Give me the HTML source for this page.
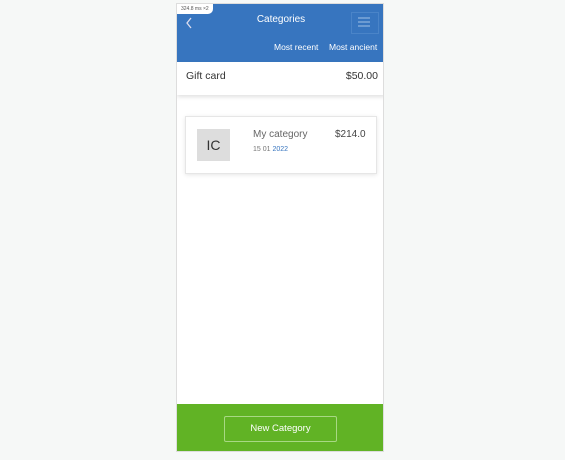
<!DOCTYPE html>
<html><head><style>
body{margin:0;width:565px;height:460px;background:#f6f8f7;font-family:"Liberation Sans",sans-serif;position:relative;overflow:hidden}
.ph{position:absolute;left:176px;top:3px;width:208px;height:449px;background:#fff;border:1px solid #ddd;box-sizing:border-box;overflow:hidden}
.hd{position:absolute;left:0;top:0;width:208px;height:58px;background:#3775bf;color:#fff}
.t{position:absolute;left:0;width:100%;top:10px;text-align:center;font-size:10px}
.tag{position:absolute;left:0;top:0;background:#fff;font-size:5px;color:#555;padding:1px 4px;border-radius:0 0 5px 0;height:8px;line-height:8px}
.s{position:absolute;top:38px;font-size:8.5px}
.gc{position:absolute;left:0;top:58px;width:208px;height:33px;background:#fff;box-shadow:0 2px 4px rgba(0,0,0,.12);font-size:10.5px;color:#333}
.card{position:absolute;left:8px;top:112px;width:190px;height:56px;border:1px solid #e6e6e6;box-shadow:0 1px 4px rgba(0,0,0,.1);background:#fff}
.ft{position:absolute;left:0;top:400px;width:208px;height:49px;background:#61b325}
.btn{position:absolute;left:47px;top:12px;width:111px;height:24px;border:1px solid #a8d884;border-radius:2px;color:#fff;font-size:9.5px;text-align:center;line-height:24px}
</style></head><body>
<div class="ph">
<div class="hd">
<div class="tag">324.8 ms ×2</div>
<svg style="position:absolute;left:8px;top:13px" width="8" height="12"><path d="M6 1 L2 6 L6 11" stroke="#dde" stroke-width="1.3" fill="none"/></svg>
<div class="t">Categories</div>
<div style="position:absolute;left:174px;top:8px;width:26px;height:20px;border:1px solid #4a84c8"></div>
<div style="position:absolute;left:181px;top:13px;width:12px;height:2px;background:#6c9bd2;box-shadow:0 4px 0 #6c9bd2,0 8px 0 #6c9bd2"></div>
<div class="s" style="left:97px">Most recent</div>
<div class="s" style="left:152px">Most ancient</div>
</div>
<div class="gc"><span style="position:absolute;left:9px;top:8px">Gift card</span><span style="position:absolute;right:7px;top:8px">$50.00</span></div>
<div class="card">
<div style="position:absolute;left:11px;top:12px;width:33px;height:32px;background:#ddd;font-size:14px;color:#333;text-align:center;line-height:32px">IC</div>
<div style="position:absolute;left:67px;top:12px;font-size:10px;color:#666">My category</div>
<div style="position:absolute;left:149px;top:12px;font-size:10px;color:#444">$214.0</div>
<div style="position:absolute;left:67px;top:29px;font-size:7px;color:#777">15 01 <span style="color:#3775bf">2022</span></div>
</div>
<div class="ft"><div class="btn">New Category</div></div>
</div>
</body></html>
